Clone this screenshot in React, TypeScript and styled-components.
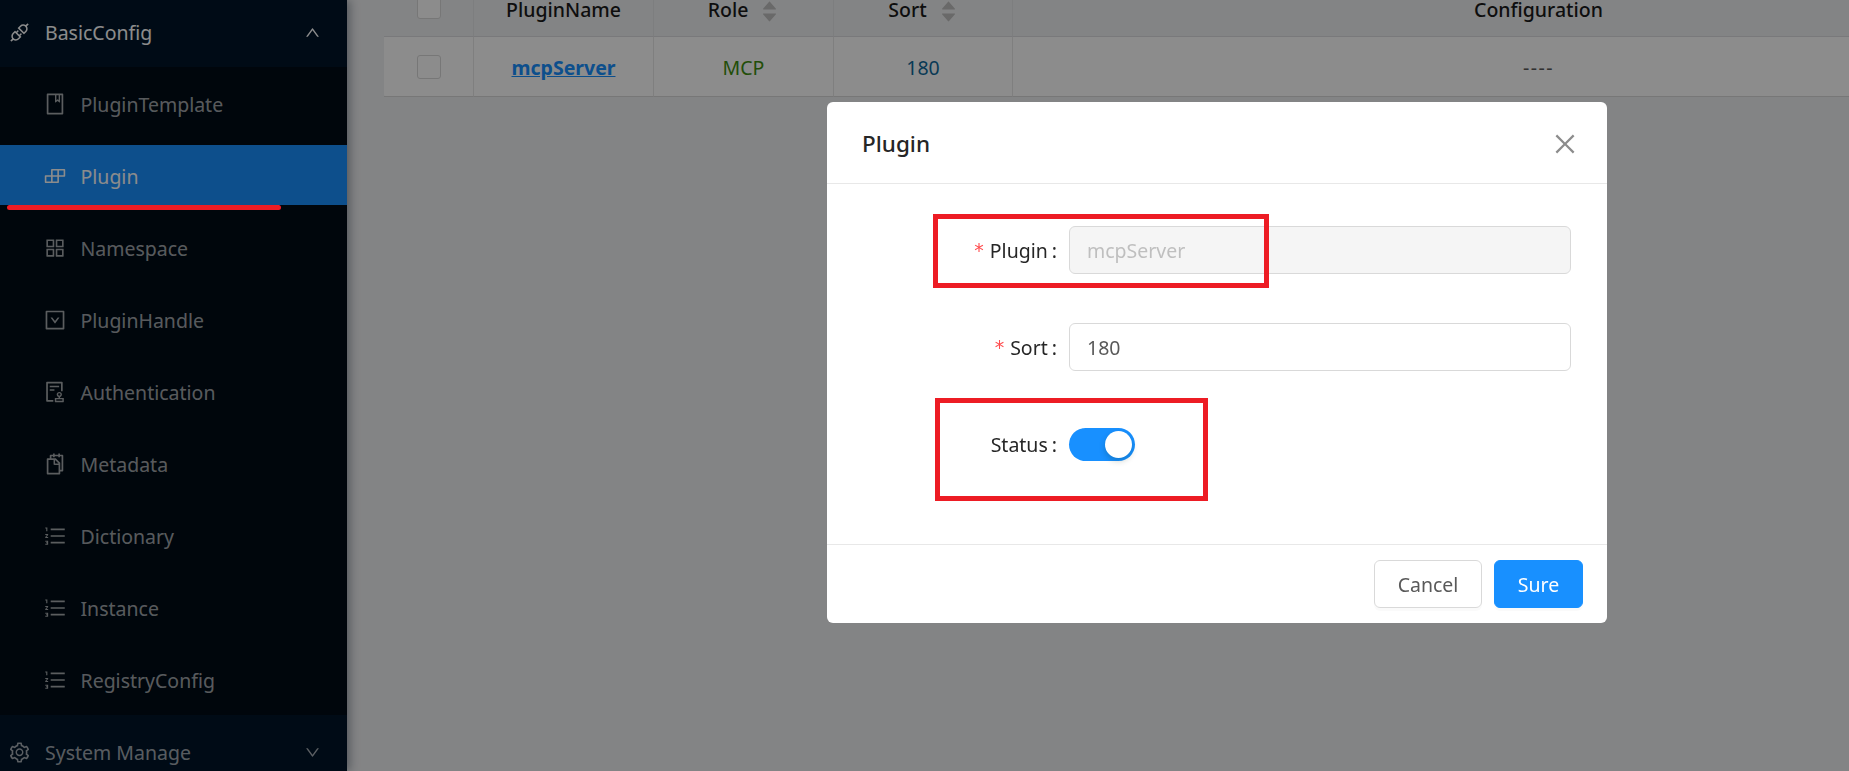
import React from "react";
import styled, {createGlobalStyle} from "styled-components";
import {
    AiFillCaretDown,
    AiFillCaretUp,
    AiOutlineApi,
    AiOutlineAppstore,
    AiOutlineAudit,
    AiOutlineBook,
    AiOutlineBuild,
    AiOutlineClose,
    AiOutlineDown,
    AiOutlineDownSquare,
    AiOutlineOrderedList,
    AiOutlineSetting,
    AiOutlineSnippets,
    AiOutlineUp
} from "react-icons/ai";

const GlobalStyle = createGlobalStyle`
  html, body {
    margin: 0;
    height: 100%;
    overflow: hidden;
    background: #eff0f2;
  }

  * {
    box-sizing: border-box;
  }

  body {
    font-family: "Noto Sans", "Open Sans", sans-serif;
    font-size: 19.5px;
    color: #262626;
  }
`;

const Page = styled.div`
  display: flex;
  width: 1849px;
  height: 771px;
  overflow: hidden;
`;

const Sidebar = styled.aside`
  flex: 0 0 347px;
  height: 771px;
  overflow: hidden;
  background: #001529;
  box-shadow: 3px 0 9px rgba(0, 21, 41, .35);
  position: relative;
  color: rgba(255, 255, 255, .65);
`;

const SubmenuTitle = styled.div<{ $open?: boolean }>`
  height: ${props => props.$open ? "67px" : "75px"};
  display: flex;
  align-items: center;
  padding: ${props => props.$open ? "0 26px 2px 8px" : "0 26px 0 8px"};
  color: ${props => props.$open ? "#fff" : "rgba(255, 255, 255, .65)"};
`;

const TitleIcon = styled.span`
  display: flex;
  font-size: 23px;
  width: 37px;
`;

const Chevron = styled.span`
  display: flex;
  margin-left: auto;
  font-size: 17px;
`;

const Submenu = styled.ul`
  list-style: none;
  margin: 0;
  padding: 6px 0 0;
  height: 648px;
  background: #000c17;
`;

const MenuItem = styled.li<{ $active?: boolean }>`
  height: 60px;
  margin-bottom: 12px;
  display: flex;
  align-items: center;
  padding: 2px 0 0 43px;
  color: ${props => props.$active ? "#fff" : "inherit"};
  background: ${props => props.$active ? "#1890ff" : "transparent"};
`;

const ItemIcon = styled.span`
  display: flex;
  font-size: 24px;
  width: 37.5px;
`;

const Main = styled.main`
  flex: 1;
  min-width: 0;
  padding: 0 0 0 37px;
  margin-top: -22px;
`;

const Table = styled.table`
  width: 1681px;
  table-layout: fixed;
  border-collapse: separate;
  border-spacing: 0;
  background: #fff;
  border-radius: 3px;
  text-align: center;
`;

const HeadCell = styled.th<{ $width?: number }>`
  width: ${props => props.$width ? `${props.$width}px` : "auto"};
  height: 59px;
  padding: 4px 0 0;
  font-weight: 500;
  color: #1a1a1a;
  background: #eff0f2;
  border-right: 1px solid #e4e5e7;
  border-bottom: 1px solid #dcdde0;
`;

const CheckHeadCell = styled(HeadCell)`
  padding: 0;
`;

const Cell = styled.td<{ $color?: string }>`
  height: 60px;
  padding: 2px 0 0;
  color: ${props => props.$color || "#595959"};
  border-right: 1px solid #e8e8e8;
  border-bottom: 1px solid #d9d9d9;
`;

const CheckCell = styled(Cell)`
  padding: 0;
`;

const Dashes = styled.span`
  letter-spacing: 1.5px;
`;

const Sorter = styled.span`
  display: inline-flex;
  flex-direction: column;
  justify-content: center;
  vertical-align: middle;
  height: 0;
  margin-left: 12px;
  font-size: 19px;
  line-height: 0;
  color: #bfbfbf;

  svg {
    flex: none;
  }

  svg + svg {
    margin-top: -7px;
  }
`;

const Checkbox = styled.span`
  display: block;
  width: 24px;
  height: 24px;
  margin: 0 auto;
  background: #fff;
  border: 1px solid #d9d9d9;
  border-radius: 3px;
`;

const PluginLink = styled.a`
  color: #1890ff;
  font-weight: 700;
  text-decoration: underline;
`;

const Mask = styled.div`
  position: fixed;
  inset: 0;
  padding: 102px 0 0 827px;
  background: rgba(0, 0, 0, .45);
`;

const Modal = styled.section`
  width: 780px;
  height: 521px;
  display: flex;
  flex-direction: column;
  background: #fff;
  border-radius: 6px;
`;

const ModalHeader = styled.header`
  flex: 0 0 82px;
  display: flex;
  align-items: center;
  justify-content: space-between;
  padding: 2px 28px 0 35px;
  border-bottom: 1px solid #e8e8e8;
`;

const ModalTitle = styled.h2`
  margin: 0;
  font-size: 22.5px;
  font-weight: 500;
  color: #262626;
`;

const CloseButton = styled.span`
  display: flex;
  font-size: 28px;
  color: #8c8c8c;
`;

const ModalBody = styled.div`
  flex: 1;
  display: flex;
  flex-direction: column;
  gap: 49px;
  padding: 42px 36px 0 0;
`;

const FormRow = styled.div`
  display: flex;
  align-items: center;
  height: 48px;
`;

const Label = styled.label`
  flex: 0 0 242px;
  display: flex;
  align-items: center;
  justify-content: flex-end;
  padding-right: 12px;
  color: #262626;
  white-space: nowrap;
`;

const Star = styled.span`
  color: #ff4d4f;
  margin-right: 6px;
  font-size: 19px;
  font-family: "DejaVu Sans", monospace;
`;

const Colon = styled.span`
  margin-left: 4px;
`;

const Field = styled.div<{ $disabled?: boolean }>`
  width: 502px;
  height: 48px;
  line-height: 47px;
  padding: 0 17px;
  border: 1.5px solid #d9d9d9;
  border-radius: 6px;
  background: ${props => props.$disabled ? "#f5f5f5" : "#fff"};
  color: ${props => props.$disabled ? "#bfbfbf" : "#595959"};
`;

const Switch = styled.span`
  width: 66px;
  height: 33px;
  display: flex;
  justify-content: flex-end;
  padding: 3px;
  border-radius: 17px;
  background: #1890ff;
`;

const Knob = styled.span`
  width: 27px;
  height: 27px;
  border-radius: 50%;
  background: #fff;
  box-shadow: 0 3px 6px rgba(0, 35, 11, .2);
`;

const ModalFooter = styled.footer`
  flex: 0 0 79px;
  display: flex;
  justify-content: flex-end;
  gap: 12px;
  padding: 15px 24px 0 0;
  border-top: 1px solid #e8e8e8;
`;

const Button = styled.button<{ $primary?: boolean }>`
  height: 48px;
  width: ${props => props.$primary ? "89px" : "108px"};
  padding: 0;
  font: inherit;
  border-radius: 6px;
  color: ${props => props.$primary ? "#fff" : "#595959"};
  background: ${props => props.$primary ? "#1890ff" : "#fff"};
  border: 1.5px solid ${props => props.$primary ? "#1890ff" : "#d9d9d9"};
  box-shadow: 0 3px 0 rgba(0, 0, 0, .02);
`;

// hand drawn red marks that sit on top of everything
const Underline = styled.div`
  position: fixed;
  left: 7px;
  top: 205px;
  width: 274px;
  height: 5px;
  border-radius: 3px;
  background: #ed1c24;
`;

const MarkBox = styled.div`
  position: fixed;
  border: 5px solid #ed1c24;
`;

const PluginMark = styled(MarkBox)`
  left: 933px;
  top: 214px;
  width: 336px;
  height: 74px;
`;

const StatusMark = styled(MarkBox)`
  left: 935px;
  top: 398px;
  width: 273px;
  height: 103px;
`;

const items = [
    {name: "PluginTemplate", icon: <AiOutlineBook/>},
    {name: "Plugin", icon: <AiOutlineBuild/>},
    {name: "Namespace", icon: <AiOutlineAppstore/>},
    {name: "PluginHandle", icon: <AiOutlineDownSquare/>},
    {name: "Authentication", icon: <AiOutlineAudit/>},
    {name: "Metadata", icon: <AiOutlineSnippets/>},
    {name: "Dictionary", icon: <AiOutlineOrderedList/>},
    {name: "Instance", icon: <AiOutlineOrderedList/>},
    {name: "RegistryConfig", icon: <AiOutlineOrderedList/>},
];

const SortIcon = () => <Sorter>
    <AiFillCaretUp/>
    <AiFillCaretDown/>
</Sorter>;

const App = () => {
    return <Page>
        <GlobalStyle/>
        <Sidebar>
            <SubmenuTitle $open>
                <TitleIcon><AiOutlineApi/></TitleIcon>
                BasicConfig
                <Chevron><AiOutlineUp/></Chevron>
            </SubmenuTitle>
            <Submenu>
                {items.map(item =>
                    <MenuItem key={item.name} $active={item.name === "Plugin"}>
                        <ItemIcon>{item.icon}</ItemIcon>
                        {item.name}
                    </MenuItem>
                )}
            </Submenu>
            <SubmenuTitle>
                <TitleIcon><AiOutlineSetting/></TitleIcon>
                System Manage
                <Chevron><AiOutlineDown/></Chevron>
            </SubmenuTitle>
        </Sidebar>
        <Main>
            <Table>
                <thead>
                <tr>
                    <CheckHeadCell $width={90}><Checkbox/></CheckHeadCell>
                    <HeadCell $width={180}>PluginName</HeadCell>
                    <HeadCell $width={180}>Role<SortIcon/></HeadCell>
                    <HeadCell $width={179}>Sort<SortIcon/></HeadCell>
                    <HeadCell>Configuration</HeadCell>
                </tr>
                </thead>
                <tbody>
                <tr>
                    <CheckCell><Checkbox/></CheckCell>
                    <Cell><PluginLink>mcpServer</PluginLink></Cell>
                    <Cell $color="#3f8f10">MCP</Cell>
                    <Cell $color="#0f6a9c">180</Cell>
                    <Cell><Dashes>----</Dashes></Cell>
                </tr>
                </tbody>
            </Table>
        </Main>
        <Mask>
            <Modal>
                <ModalHeader>
                    <ModalTitle>Plugin</ModalTitle>
                    <CloseButton><AiOutlineClose/></CloseButton>
                </ModalHeader>
                <ModalBody>
                    <FormRow>
                        <Label><Star>*</Star>Plugin<Colon>:</Colon></Label>
                        <Field $disabled>mcpServer</Field>
                    </FormRow>
                    <FormRow>
                        <Label><Star>*</Star>Sort<Colon>:</Colon></Label>
                        <Field>180</Field>
                    </FormRow>
                    <FormRow>
                        <Label>Status<Colon>:</Colon></Label>
                        <Switch><Knob/></Switch>
                    </FormRow>
                </ModalBody>
                <ModalFooter>
                    <Button>Cancel</Button>
                    <Button $primary>Sure</Button>
                </ModalFooter>
            </Modal>
        </Mask>
        <Underline/>
        <PluginMark/>
        <StatusMark/>
    </Page>
};

export default App;
